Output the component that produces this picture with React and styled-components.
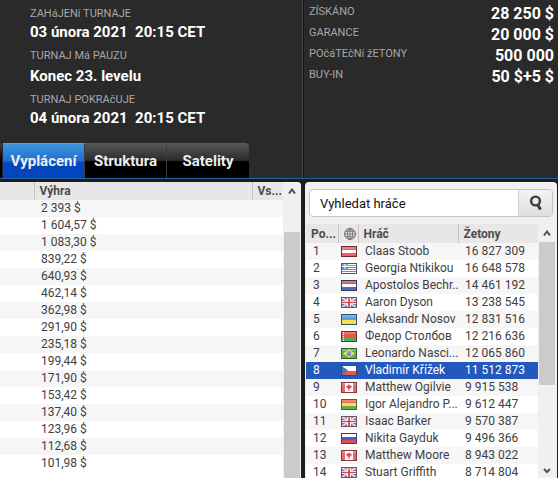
import React, { useState } from 'react';
import styled, { createGlobalStyle, css } from 'styled-components';

const GlobalStyle = createGlobalStyle`
  * {
    box-sizing: border-box;
  }

  body {
    margin: 0;
    background: #1c1e1e;
    font-family: Roboto, 'Noto Sans', sans-serif;
  }

  button,
  input {
    font-family: inherit;
  }
`;

const Lobby = styled.main`
  display: flex;
  flex-direction: column;
  height: 100vh;
  overflow: hidden;
`;

const Header = styled.header`
  display: grid;
  grid-template-columns: 303fr 255fr;
  flex: none;
  background: #2a2a2a;
  border-bottom: 1px solid #2461a4;
`;

const Schedule = styled.section`
  display: flex;
  flex-direction: column;
  gap: 10px;
  padding-top: 5px;
  border-right: 1px solid #4a4a4a;
`;

const Times = styled.dl`
  margin: 0;
  padding-left: 30px;
`;

const Label = styled.dt`
  height: 16px;
  font-size: 11px;
  line-height: 18px;
  color: #a8a8a8;
`;

const Time = styled.dd`
  margin: ${({ $spaced }) => ($spaced ? '2px 0 4px' : '0 0 4px')};
  font-size: 15px;
  font-weight: 700;
  line-height: 22px;
  color: #fff;
  white-space: pre;
`;

const Prizes = styled.dl`
  margin: 0;
  padding: 3px 4px 0 5px;
  border-left: 1px solid #111;
`;

const PrizeLine = styled.div`
  display: flex;
  justify-content: space-between;
  height: 21px;
`;

const Prize = styled.dd`
  margin: 0;
  font-size: 16px;
  font-weight: 700;
  line-height: 22px;
  color: #fff;
`;

const Tabs = styled.nav`
  display: flex;

  &::before {
    content: '';
    width: 2px;
    background: linear-gradient(#444, #000 50%);
    border-right: 1px solid #2a2a2a;
    border-top-right-radius: 4px;
  }
`;

const Tab = styled.button`
  width: 82px;
  height: 35px;
  padding: 0;
  border: 0;
  border-right: 1px solid #3c3c3c;
  border-top: 1px solid #5a5a5a;
  background: linear-gradient(#555 0%, #2c2c2c 48%, #000 52%, #000 100%);
  font-size: 15px;
  font-weight: 700;
  line-height: 20px;
  color: #eee;
  cursor: pointer;

  &:last-child {
    border-right: 0;
    border-top-right-radius: 4px;
  }

  ${({ $active }) =>
    $active &&
    css`
      border-top-color: #4da3e6;
      background: linear-gradient(#3f95dc 0%, #1e70d0 48%, #0345bd 56%, #0345bd 100%);
    `}
`;

const Panels = styled.div`
  display: grid;
  grid-template-columns: 301fr 252fr;
  column-gap: 4px;
  flex: 1;
  min-height: 0;
  padding: 3px 1px 0 0;
`;

const Panel = styled.section`
  display: flex;
  flex-direction: column;
  min-width: 0;
  min-height: 0;
  padding: ${({ $inset }) => ($inset ? '7px 1px 0' : '0')};
  border-radius: ${({ $inset }) => ($inset ? '4px 4px 0 0' : '0 4px 0 0')};
  background: ${({ $inset }) => ($inset ? '#f1eff0' : '#fff')};
  overflow: hidden;
`;

const ListArea = styled.div`
  display: flex;
  flex: 1;
  min-height: 0;
`;

const TableClip = styled.div`
  flex: 1;
  min-width: 0;
  overflow: hidden;
  background: #fff;
`;

const Table = styled.table`
  width: 100%;
  table-layout: fixed;
  border-collapse: collapse;
  color: #414141;
`;

const HeadCell = styled.th`
  width: ${({ $width }) => $width || 'auto'};
  height: ${({ $tall }) => ($tall ? '19px' : '18px')};
  padding: 0 0 0 5px;
  border-left: 1px solid #c6c4c5;
  background: #e8e6e7;
  font-size: 12px;
  font-weight: 700;
  line-height: 18px;
  text-align: left;
  white-space: nowrap;
  color: #4c4c4c;

  &:first-child {
    border-left: 0;
  }
`;

const Row = styled.tr`
  height: 17px;
  background: #fff;

  &:nth-child(odd) {
    background: #f6f6f7;
  }

  ${({ $selected }) =>
    $selected &&
    css`
      &:nth-child(n) {
        background: #2358bd;
        color: #fff;
      }
    `}
`;

const Cell = styled.td`
  height: 17px;
  padding: 0 0 0 ${({ $flag }) => ($flag ? '3px' : '7px')};
  font-size: 12px;
  line-height: 17px;
  white-space: nowrap;
`;

const ScrollTrack = styled.div`
  display: flex;
  flex: none;
  flex-direction: column;
  width: 18px;
  padding: 0 1px;
  background: #f1f0f1;
`;

const ScrollButton = styled.button`
  display: flex;
  flex: none;
  align-items: center;
  justify-content: center;
  height: ${({ $end }) => ($end ? '14px' : '18px')};
  padding: 0;
  border: 0;
  background: transparent;
  color: #505050;
`;

const Thumb = styled.div`
  flex: ${({ $grow }) => $grow};
  background: #cbcbcb;
`;

const TrackGap = styled.div`
  flex: ${({ $flex }) => $flex};
`;

const Search = styled.form`
  display: flex;
  flex: none;
  height: 28px;
  margin: 0 3px 7px;
  border: 1px solid #c6c4c5;
  border-radius: 4px;
  background: #fff;
  overflow: hidden;
`;

const SearchInput = styled.input`
  flex: 1;
  min-width: 0;
  padding: 0 10px;
  border: 0;
  outline: 0;
  background: transparent;
  font-size: 13px;
  color: #111;

  &::placeholder {
    color: #111;
    opacity: 1;
  }
`;

const SearchButton = styled.button`
  display: flex;
  align-items: center;
  justify-content: center;
  width: 34px;
  padding: 0;
  border: 0;
  border-left: 1px solid #d0d0d0;
  background: linear-gradient(#f3f3f3, #dedede);
  color: #3c3c3c;
`;

const Icon = styled.svg`
  display: block;
`;

const FlagDrawing = styled.svg`
  display: block;
  width: 16px;
  height: 11px;
`;

const times = [
  { label: 'ZAHáJENí TURNAJE', value: '03 února 2021  20:15 CET' },
  { label: 'TURNAJ Má PAUZU', value: 'Konec 23. levelu', spaced: true },
  { label: 'TURNAJ POKRAčUJE', value: '04 února 2021  20:15 CET' },
];

const prizes = [
  { label: 'ZÍSKÁNO', value: '28 250 $' },
  { label: 'GARANCE', value: '20 000 $' },
  { label: 'POčáTEčNí žETONY', value: '500 000' },
  { label: 'BUY-IN', value: '50 $+5 $' },
];

const tabs = ['Vyplácení', 'Struktura', 'Satelity'];

const payouts = [
  '2 393 $',
  '1 604,57 $',
  '1 083,30 $',
  '839,22 $',
  '640,93 $',
  '462,14 $',
  '362,98 $',
  '291,90 $',
  '235,18 $',
  '199,44 $',
  '171,90 $',
  '153,42 $',
  '137,40 $',
  '123,96 $',
  '112,68 $',
  '101,98 $',
];

const players = [
  { flag: 'at', name: 'Claas Stoob', chips: '16 827 309' },
  { flag: 'gr', name: 'Georgia Ntikikou', chips: '16 648 578' },
  { flag: 'nl', name: 'Apostolos Bechr..', chips: '14 461 192' },
  { flag: 'gb', name: 'Aaron Dyson', chips: '13 238 545' },
  { flag: 'ua', name: 'Aleksandr Nosov', chips: '12 831 516' },
  { flag: 'by', name: 'Федор Столбов', chips: '12 216 636' },
  { flag: 'br', name: 'Leonardo Nasci...', chips: '12 065 860' },
  { flag: 'cz', name: 'Vladimír Křížek', chips: '11 512 873' },
  { flag: 'ca', name: 'Matthew Ogilvie', chips: '9 915 538' },
  { flag: 'bo', name: 'Igor Alejandro P...', chips: '9 612 447' },
  { flag: 'gb', name: 'Isaac Barker', chips: '9 570 387' },
  { flag: 'ru', name: 'Nikita Gayduk', chips: '9 496 366' },
  { flag: 'ca', name: 'Matthew Moore', chips: '8 943 022' },
  { flag: 'gb', name: 'Stuart Griffith', chips: '8 714 804' },
];

const stripes = (top, middle, bottom) => (
  <>
    <rect width="16" height="4" fill={top} />
    <rect y="4" width="16" height="3" fill={middle} />
    <rect y="7" width="16" height="4" fill={bottom} />
  </>
);

const flags = {
  at: { edge: '#6b2a32', art: stripes('#e0484e', '#fff', '#e0484e') },
  nl: { edge: '#33395c', art: stripes('#d8323c', '#fff', '#2c58a8') },
  bo: { edge: '#55602f', art: stripes('#e2523c', '#f0dc3c', '#4f9c3c') },
  ru: { edge: '#4a3a6c', art: stripes('#fff', '#2c40d0', '#d83038') },
  gr: {
    edge: '#4c5c80',
    art: (
      <>
        <rect width="16" height="11" fill="#fff" />
        <path d="M7 2.5h9M7 4.5h9M1 6.5h15M1 8.5h15" stroke="#4a7cc8" />
        <path d="M1 1h6v5H1z" fill="#4a7cc8" />
        <path d="M4 1v5M1 3.5h6" stroke="#fff" />
      </>
    ),
  },
  gb: {
    edge: '#6c5468',
    art: (
      <>
        <rect width="16" height="11" fill="#5064a0" />
        <path d="M0 0l16 11M16 0L0 11" stroke="#f4d8dc" strokeWidth="1.6" />
        <path d="M8 0v11" stroke="#fff" strokeWidth="4" />
        <path d="M0 5.5h16" stroke="#fff" strokeWidth="3" />
        <path d="M8 0v11" stroke="#d83844" strokeWidth="2" />
        <path d="M0 5.5h16" stroke="#d02834" strokeWidth="1.4" />
      </>
    ),
  },
  ua: {
    edge: '#3c5068',
    art: (
      <>
        <rect width="16" height="6" fill="#3c94e0" />
        <rect y="6" width="16" height="5" fill="#f4e02c" />
      </>
    ),
  },
  by: {
    edge: '#6c3030',
    art: (
      <>
        <rect width="16" height="7" fill="#e03c34" />
        <rect y="7" width="16" height="4" fill="#3c9c40" />
        <path d="M2.5 1v9" stroke="#fff" strokeDasharray="1 1" />
      </>
    ),
  },
  br: {
    edge: '#385c34',
    art: (
      <>
        <rect width="16" height="11" fill="#44a040" />
        <path d="M8 1.5l6 4-6 4-6-4z" fill="#f0e040" />
        <circle cx="8" cy="5.5" r="2.3" fill="#2c54a8" />
        <path d="M6 5q2-.5 4 1" stroke="#fff" strokeWidth="0.7" fill="none" />
      </>
    ),
  },
  cz: {
    edge: '#4c4058',
    art: (
      <>
        <rect width="16" height="6" fill="#fff" />
        <rect y="6" width="16" height="5" fill="#dc3c40" />
        <path d="M0 0l7 5.5L0 11z" fill="#3c5c9c" />
      </>
    ),
  },
  ca: {
    edge: '#803c44',
    art: (
      <>
        <rect width="16" height="11" fill="#fff" />
        <path d="M0 0h4v11H0zM12 0h4v11h-4z" fill="#e05058" />
        <path d="M8 2l1 1.5 2 .5-1 2-1.5 1v2h-1V7L6 6 5 4l2-.5z" fill="#d8303c" />
      </>
    ),
  },
};

const Flag = ({ code }) => {
  const { edge, art } = flags[code];
  return (
    <FlagDrawing viewBox="0 0 16 11" aria-hidden="true">
      {art}
      <rect x="1" y="1" width="14" height="9" fill="#fff" opacity="0.14" />
      <rect x="1" y="1" width="14" height="2" fill="#fff" opacity="0.2" />
      <rect x="0.5" y="0.5" width="15" height="10" fill="none" stroke={edge} />
    </FlagDrawing>
  );
};

const GlobeIcon = () => (
  <Icon width="12" height="12" viewBox="0 0 12 12" fill="none" stroke="#666" role="img" aria-label="Země">
    <circle cx="6" cy="6" r="5.4" />
    <ellipse cx="6" cy="6" rx="2.6" ry="5.4" strokeWidth="0.8" />
    <path d="M6 .5v11M.5 6h11M1.5 3.3h9M1.5 8.7h9" strokeWidth="0.8" />
  </Icon>
);

const SearchIcon = () => (
  <Icon width="14" height="16" viewBox="0 0 14 16" fill="none" stroke="currentColor">
    <circle cx="6.5" cy="6" r="4.4" strokeWidth="2.4" />
    <path d="M8.5 9.5l3 5" strokeWidth="3" />
  </Icon>
);

const Arrow = ({ down }) => (
  <Icon width="8" height="6" viewBox="0 0 8 6" fill="none" stroke="currentColor" strokeWidth="2">
    <path d={down ? 'M1 1l3 3 3-3' : 'M1 5.5l3-4 3 4'} />
  </Icon>
);

const PayoutPanel = () => (
  <Panel>
    <ListArea>
      <TableClip>
        <Table>
          <thead>
            <tr>
              <HeadCell $width="34px" aria-label="Místo" />
              <HeadCell>Výhra</HeadCell>
              <HeadCell $width="31px">Vs...</HeadCell>
            </tr>
          </thead>
          <tbody>
            {payouts.map((amount) => (
              <Row key={amount}>
                <Cell />
                <Cell>{amount}</Cell>
                <Cell />
              </Row>
            ))}
          </tbody>
        </Table>
      </TableClip>
      <ScrollTrack>
        <ScrollButton aria-label="Nahoru">
          <Arrow />
        </ScrollButton>
        <TrackGap $flex="0 0 32px" />
        <Thumb $grow="1" />
      </ScrollTrack>
    </ListArea>
  </Panel>
);

const PlayersPanel = () => {
  const [selected, setSelected] = useState(7);
  return (
    <Panel $inset>
      <Search onSubmit={(e) => e.preventDefault()}>
        <SearchInput placeholder="Vyhledat hráče" aria-label="Vyhledat hráče" />
        <SearchButton type="submit" aria-label="Hledat">
          <SearchIcon />
        </SearchButton>
      </Search>
      <ListArea>
        <TableClip>
          <Table>
            <thead>
              <tr>
                <HeadCell $tall $width="32px">
                  Po...
                </HeadCell>
                <HeadCell $tall $width="20px">
                  <GlobeIcon />
                </HeadCell>
                <HeadCell $tall $width="100px">
                  Hráč
                </HeadCell>
                <HeadCell $tall>Žetony</HeadCell>
              </tr>
            </thead>
            <tbody>
              {players.map((player, i) => (
                <Row key={player.name} $selected={i === selected} onClick={() => setSelected(i)}>
                  <Cell>{i + 1}</Cell>
                  <Cell $flag>
                    <Flag code={player.flag} />
                  </Cell>
                  <Cell>{player.name}</Cell>
                  <Cell>{player.chips}</Cell>
                </Row>
              ))}
            </tbody>
          </Table>
        </TableClip>
        <ScrollTrack>
          <ScrollButton aria-label="Nahoru">
            <Arrow />
          </ScrollButton>
          <Thumb $grow="143" />
          <TrackGap $flex="79" />
          <ScrollButton $end aria-label="Dolů">
            <Arrow down />
          </ScrollButton>
        </ScrollTrack>
      </ListArea>
    </Panel>
  );
};

const App = () => {
  const [active, setActive] = useState(tabs[0]);
  return (
    <>
      <GlobalStyle />
      <Lobby>
        <Header>
          <Schedule>
            <Times>
              {times.map(({ label, value, spaced }) => (
                <React.Fragment key={label}>
                  <Label>{label}</Label>
                  <Time $spaced={spaced}>{value}</Time>
                </React.Fragment>
              ))}
            </Times>
            <Tabs>
              {tabs.map((tab) => (
                <Tab key={tab} $active={tab === active} onClick={() => setActive(tab)}>
                  {tab}
                </Tab>
              ))}
            </Tabs>
          </Schedule>
          <Prizes>
            {prizes.map(({ label, value }) => (
              <PrizeLine key={label}>
                <Label>{label}</Label>
                <Prize>{value}</Prize>
              </PrizeLine>
            ))}
          </Prizes>
        </Header>
        <Panels>
          <PayoutPanel />
          <PlayersPanel />
        </Panels>
      </Lobby>
    </>
  );
};

export default App;
